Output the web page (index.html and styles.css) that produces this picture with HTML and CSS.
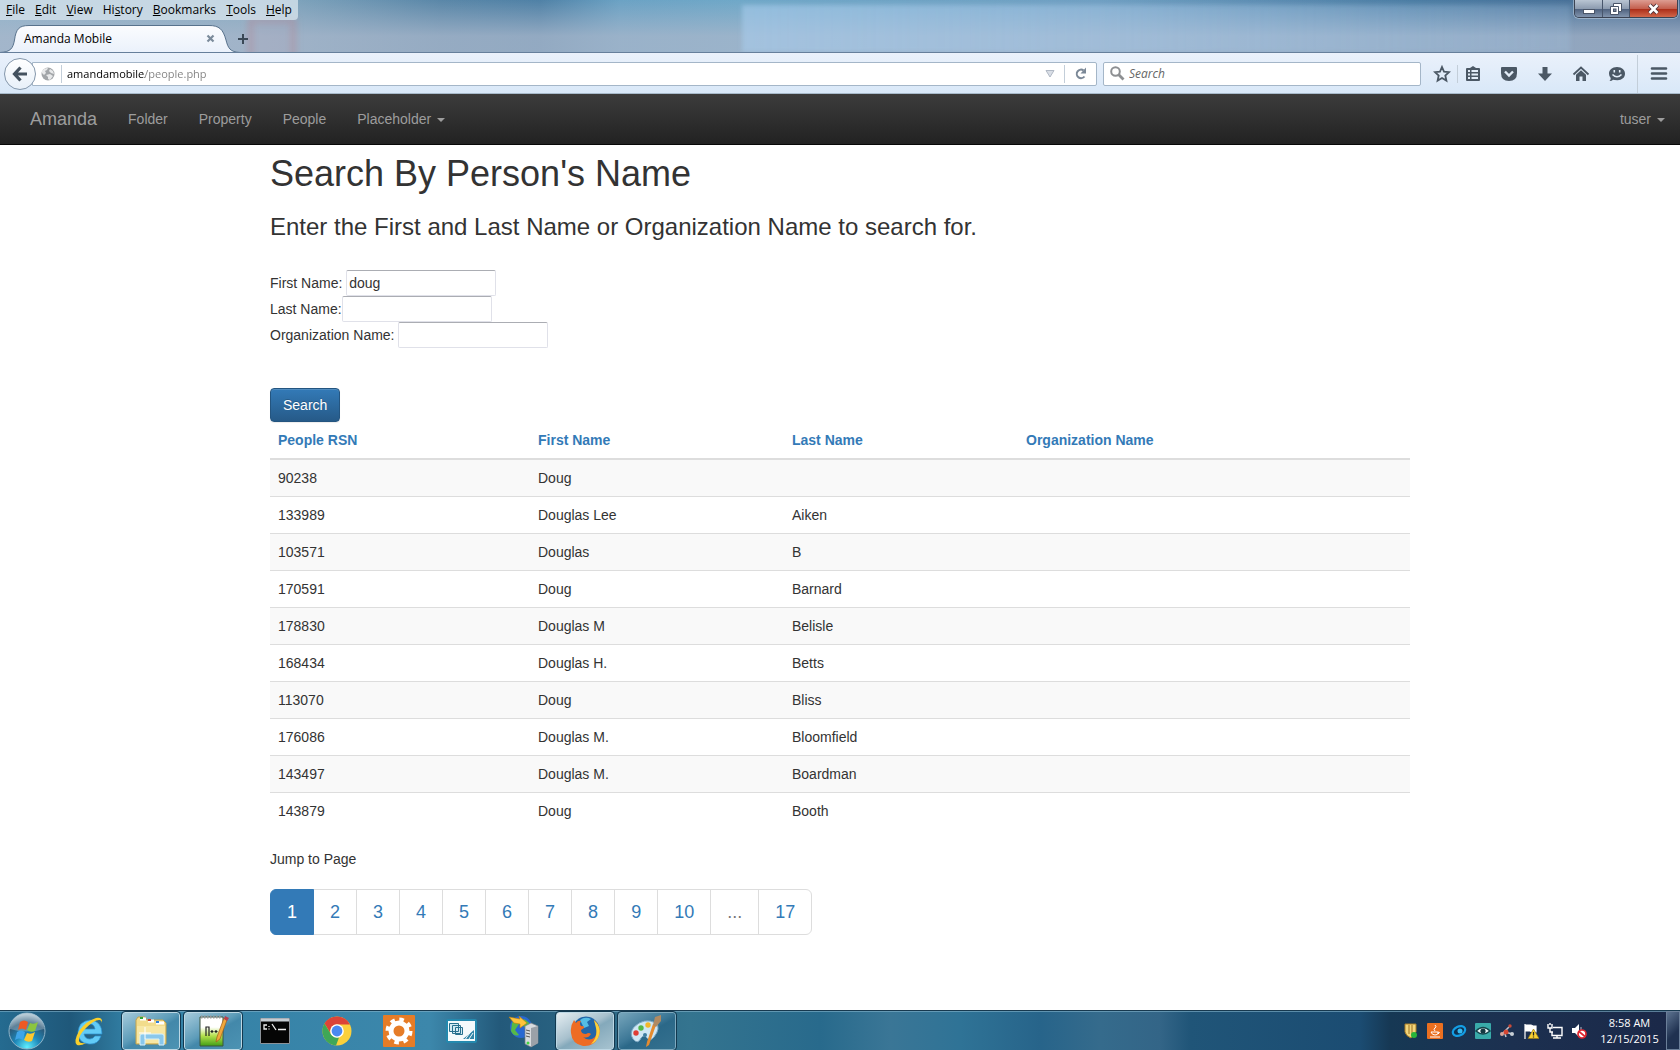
FILE: index.html
```html
<!DOCTYPE html>
<html lang="en">
<head>
<meta charset="utf-8">
<title>Amanda Mobile</title>
<link rel="stylesheet" href="styles.css">
</head>
<body>
<header class="titlebar">
  <div class="title-main">
    <nav class="menubar" aria-label="Application menu">
      <button class="menu"><u>F</u>ile</button>
      <button class="menu"><u>E</u>dit</button>
      <button class="menu"><u>V</u>iew</button>
      <button class="menu">Hi<u>s</u>tory</button>
      <button class="menu"><u>B</u>ookmarks</button>
      <button class="menu"><u>T</u>ools</button>
      <button class="menu"><u>H</u>elp</button>
    </nav>
    <div class="tabs">
      <div class="tab">
        <svg class="tab-shape" viewBox="0 0 240 29" aria-hidden="true"><defs><linearGradient id="tabfill" x2="0" y2="1"><stop stop-color="#fbfcfe"/><stop offset="1" stop-color="#eaf1fb"/></linearGradient></defs><path d="M0 29V28.500C11 28 13 24 14.500 16C16 5 19 1.500 29 1.500H209C219 1.500 223 5 226 16C228 24 230 28 240 28.500V29Z" fill="url(#tabfill)"/><path d="M0 28.500C11 28 13 24 14.500 16C16 5 19 1.500 29 1.500H209C219 1.500 223 5 226 16C228 24 230 28 240 28.500" fill="none" stroke="#58728c"/></svg>
        <span class="tab-title">Amanda Mobile</span>
        <button class="tab-close" aria-label="Close tab"><svg width="9" height="9" viewBox="0 0 9 9"><path d="M1.500 1.500L7.500 7.500M7.500 1.500L1.500 7.500" stroke="#7b8b9b" stroke-width="2.200"/></svg></button>
      </div>
      <button class="tab-new" aria-label="New tab"><svg width="12" height="12" viewBox="0 0 12 12"><path d="M6 1V11M1 6H11" stroke="#3a4856" stroke-width="2"/></svg></button>
    </div>
  </div>
  <div class="window-controls">
    <button class="wc wc-min" aria-label="Minimize"><svg width="12" height="12" viewBox="0 0 12 12"><rect x=".500" y="6.500" width="11" height="4" fill="#fff" stroke="#4a5568"/></svg></button>
    <button class="wc wc-max" aria-label="Restore"><svg width="12" height="12" viewBox="0 0 12 12"><path d="M3.500 .500H11.500V8.500H8.500V11.500H.500V3.500H3.500Z" fill="#fff" stroke="#4a5568"/><path d="M3 3.500H8.500V9" fill="none" stroke="#4a5568"/><rect x="3.500" y="6" width="2.500" height="2.500" fill="#7b8aa0" stroke="#4a5568"/></svg></button>
    <button class="wc wc-close" aria-label="Close"><svg width="13" height="12" viewBox="0 0 13 12"><path d="M2.500 2L10.500 10M10.500 2L2.500 10" stroke="#4a3038" stroke-width="4.500"/><path d="M2.500 2L10.500 10M10.500 2L2.500 10" stroke="#fff" stroke-width="2.600"/></svg></button>
  </div>
</header>

<div class="toolbar">
  <button class="back" aria-label="Back"><svg width="16" height="16" viewBox="0 0 16 16"><path d="M8.500 1.500L2.500 8L8.500 14.500M3 8H15" fill="none" stroke="#44525f" stroke-width="3.200"/></svg></button>
  <div class="urlbar">
    <svg width="14" height="14" viewBox="0 0 14 14" aria-hidden="true"><circle cx="7" cy="7" r="6.500" fill="#a2a5a8"/><path d="M1 4Q3 1 7 1L6 3L4 4L5 6L3 8L1 6ZM9 2L12 4L13 7L10 6L8 4ZM5 8L9 7L12 9L9 13L7 12V10Z" fill="#e8e9ea"/></svg>
    <span class="sep"></span>
    <input class="url" aria-label="Address" value="amandamobile/people.php">
    <button class="ico drop" aria-label="History"><svg width="10" height="8" viewBox="0 0 10 8"><path d="M1 .500H9L5 7Z" fill="#d9dee6" stroke="#b0b8c4"/></svg></button>
    <span class="sep"></span>
    <button class="ico reload" aria-label="Reload"><svg width="12" height="13" viewBox="0 0 12 13"><path d="M9.500 9.500A4.300 4.300 0 1 1 8.500 3.300" fill="none" stroke="#7b8897" stroke-width="2"/><path d="M11 .500V6.500H5.500Z" fill="#7b8897"/></svg></button>
  </div>
  <div class="searchbar">
    <svg width="15" height="15" viewBox="0 0 15 15" aria-hidden="true"><circle cx="5.500" cy="5.500" r="4.300" fill="none" stroke="#8d8f92" stroke-width="2"/><path d="M8.500 8.500L13.500 13.500" stroke="#8d8f92" stroke-width="2.800"/></svg>
    <input class="searchinput" aria-label="Search" placeholder="Search">
  </div>
  <div class="tools">
    <button class="tool star" aria-label="Bookmark"><svg width="18" height="18" viewBox="0 0 18 18"><path d="M9 2L11 6.700L16 7.200L12.300 10.500L13.400 15.600L9 13L4.600 15.600L5.700 10.500L2 7.200L7 6.700Z" fill="none" stroke="#4b5865" stroke-width="1.800"/></svg></button>
    <span class="sep"></span>
    <button class="tool" aria-label="Bookmarks list"><svg width="18" height="18" viewBox="0 0 18 18"><path d="M6 3L9 1L12 3H15Q16 3 16 4V15Q16 16 15 16H3Q2 16 2 15V4Q2 3 3 3Z" fill="#4b5865"/><path d="M4 6H6M7.500 6H14M4 9.500H6M7.500 9.500H14M4 13H6M7.500 13H14" stroke="#e3edf8" stroke-width="2"/></svg></button>
    <button class="tool" aria-label="Pocket"><svg width="18" height="18" viewBox="0 0 18 18"><path d="M2 2H16Q17 2 17 3V8Q17 16 9 16Q1 16 1 8V3Q1 2 2 2Z" fill="#4b5865"/><path d="M5 6.500L9 10.500L13 6.500" fill="none" stroke="#e3edf8" stroke-width="2.400"/></svg></button>
    <button class="tool" aria-label="Downloads"><svg width="18" height="18" viewBox="0 0 18 18"><path d="M6.500 2H11.500V8.500H16L9 16L2 8.500H6.500Z" fill="#4b5865"/></svg></button>
    <button class="tool" aria-label="Home"><svg width="18" height="18" viewBox="0 0 18 18"><path d="M1.500 9.500L9 2.500L16.500 9.500" fill="none" stroke="#4b5865" stroke-width="1.800"/><path d="M4 9.700L9 5.200L14 9.700V16H10.500V11.500H7.500V16H4Z" fill="#4b5865"/></svg></button>
    <button class="tool" aria-label="Hello"><svg width="18" height="18" viewBox="0 0 18 18"><path d="M9 2C14 2 17 5 17 8.700C17 12.500 14 15 9.500 15.200Q6 15 5 14.700Q4 16 1.500 16Q3 14.500 2.700 13Q1 11 1 8.700C1 5 4 2 9 2Z" fill="#4b5865"/><path d="M6.300 5V7.500M11.700 5V7.500" stroke="#e3edf8" stroke-width="1.600"/><path d="M4.500 9.500Q9 14 13.500 9.500" fill="none" stroke="#e3edf8" stroke-width="1.600"/></svg></button>
    <span class="sep tall"></span>
    <button class="tool burger" aria-label="Menu"><svg width="18" height="18" viewBox="0 0 18 18"><path d="M2 3.500H16M2 8.500H16M2 13.500H16" stroke="#4b5865" stroke-width="2.600" stroke-linecap="round"/></svg></button>
  </div>
</div>

<nav class="navbar">
  <a class="brand" href="#">Amanda</a>
  <a class="navlink" href="#">Folder</a>
  <a class="navlink" href="#">Property</a>
  <a class="navlink" href="#">People</a>
  <a class="navlink" href="#">Placeholder<span class="caret"></span></a>
  <a class="navlink user" href="#">tuser<span class="caret"></span></a>
</nav>

<main class="page">
  <div class="container">
    <h1>Search By Person's Name</h1>
    <h3>Enter the First and Last Name or Organization Name to search for.</h3>
    <form class="people-form">
      <div class="field"><label for="first">First Name:</label> <input id="first" value="doug"></div>
      <div class="field"><label for="last">Last Name:</label><input id="last"></div>
      <div class="field"><label for="org">Organization Name:</label> <input id="org"></div>
      <button class="btn" type="button">Search</button>
    </form>
    <table class="table">
      <colgroup><col class="col-rsn"><col class="col-first"><col class="col-last"><col></colgroup>
      <thead><tr><th><a href="#">People RSN</a></th><th><a href="#">First Name</a></th><th><a href="#">Last Name</a></th><th><a href="#">Organization Name</a></th></tr></thead>
      <tbody>
        <tr><td>90238</td><td>Doug</td><td></td><td></td></tr>
        <tr><td>133989</td><td>Douglas Lee</td><td>Aiken</td><td></td></tr>
        <tr><td>103571</td><td>Douglas</td><td>B</td><td></td></tr>
        <tr><td>170591</td><td>Doug</td><td>Barnard</td><td></td></tr>
        <tr><td>178830</td><td>Douglas M</td><td>Belisle</td><td></td></tr>
        <tr><td>168434</td><td>Douglas H.</td><td>Betts</td><td></td></tr>
        <tr><td>113070</td><td>Doug</td><td>Bliss</td><td></td></tr>
        <tr><td>176086</td><td>Douglas M.</td><td>Bloomfield</td><td></td></tr>
        <tr><td>143497</td><td>Douglas M.</td><td>Boardman</td><td></td></tr>
        <tr><td>143879</td><td>Doug</td><td>Booth</td><td></td></tr>
      </tbody>
    </table>
    <p class="jump">Jump to Page</p>
    <ul class="pagination">
      <li><a class="active" href="#">1</a></li><li><a href="#">2</a></li><li><a href="#">3</a></li><li><a href="#">4</a></li><li><a href="#">5</a></li><li><a href="#">6</a></li><li><a href="#">7</a></li><li><a href="#">8</a></li><li><a href="#">9</a></li><li><a href="#">10</a></li><li><span>...</span></li><li><a href="#">17</a></li>
    </ul>
  </div>
</main>

<footer class="taskbar">
  <button class="start" aria-label="Start"><svg width="40" height="38" viewBox="0 0 40 38"><defs><radialGradient id="orb" cy=".95" r=".9"><stop stop-color="#5ff0ff"/><stop offset=".4" stop-color="#1e86b8"/><stop offset=".75" stop-color="#2b5877"/><stop offset="1" stop-color="#9fb9c8"/></radialGradient></defs><circle cx="20" cy="19" r="18" fill="url(#orb)" stroke="#8fb4c8"/><path d="M3 17A17 16 0 0 1 37 17Q20 22 3 17Z" fill="#fff" opacity=".25"/><path d="M13 10Q17 7 21 10L19 18Q15 15 11 18Z" fill="#ee5a24"/><path d="M23 11Q27 13 31 10L28 19Q24 21 20 18Z" fill="#8cc63f"/><path d="M10 20Q14 17 18 20L16 28Q12 25 8 28Z" fill="#3fa5e8"/><path d="M20 21Q24 23 28 20L25 29Q21 31 17 28Z" fill="#fdc82f"/></svg></button>
  <div class="apps">
    <button class="app" aria-label="Internet Explorer"><svg width="32" height="32" viewBox="0 0 32 32"><path d="M29 19H11Q12 24 17 24Q20 24 22 21H28Q25 30 16 29Q5 28 5 17Q6 6 17 5Q29 6 29 19ZM11 14H22Q21 9 17 9Q12 9 11 14Z" fill="#62cbf6" stroke="#2b8fd0" stroke-width=".7"/><path d="M29 8Q30 2 23 3Q13 6 6 16Q0 27 4 30Q8 31 13 28Q7 29 6 26Q5 21 13 13Q22 4 27 5Q29 6 29 8Z" fill="#f9cf2c"/></svg></button>
    <button class="app open" aria-label="Windows Explorer"><svg width="34" height="32" viewBox="0 0 34 32"><path d="M2 5L4 2H11L13 5H29L32 8V29H2Z" fill="#f2dc8c" stroke="#c4a44c"/><path d="M6 4H12M14 6H20M22 8H30" stroke="#fff" stroke-width="3"/><path d="M6 3H9" stroke="#35a535" stroke-width="2"/><path d="M14 5H17" stroke="#c8372c" stroke-width="2"/><path d="M22 7H25" stroke="#2f7ed8" stroke-width="2"/><path d="M3 11H31V28H3Z" fill="#f7e7a4"/><path d="M6 30V21Q6 19 8 19H28Q30 19 30 21V30H25V24H11V30Z" fill="#8ac8ec" stroke="#d7f1fc"/><path d="M11 12V24M5 18H17" stroke="#fff"/></svg></button>
    <button class="app open" aria-label="Notepad++"><svg width="32" height="34" viewBox="0 0 32 34"><defs><linearGradient id="npp" x2="0" y2="1"><stop offset=".35" stop-color="#fff"/><stop offset=".65" stop-color="#b4e04c"/><stop offset="1" stop-color="#3f9e14"/></linearGradient></defs><path d="M3 3H26V32H3Z" fill="url(#npp)" stroke="#3d5540"/><path d="M4 3H25" stroke="#999" stroke-width="3" stroke-dasharray="1.500 1.500"/><path d="M9 22V13H12V22M13.500 17.500H16.500M15 16V19M17.500 17.500H20.500M19 16V19" fill="none" stroke="#222" stroke-width="1.200"/><path d="M27 4L30 6L23 25L19 28L20 23Z" fill="#efa83b" stroke="#a05c18" stroke-width=".7"/><path d="M28 2L32 4L30 7L27 5Z" fill="#b54050"/></svg></button>
    <button class="app" aria-label="Command Prompt"><svg width="30" height="26" viewBox="0 0 30 26"><path d="M.500 .500H29.500V25.500H.500Z" fill="#050505" stroke="#8b9299"/><path d="M1 2H29" stroke="#c6ccd2" stroke-width="3"/><path d="M7 7H4V11H7M9 8V9M9 10.500V11.500M12 6L16 12M18 11.500H26" fill="none" stroke="#eee" stroke-width="1.300"/></svg></button>
    <button class="app" aria-label="Chrome"><svg width="30" height="30" viewBox="0 0 30 30"><circle cx="15" cy="15" r="14.500" fill="#fbd03b"/><path d="M2.500 7.500A14.500 14.500 0 0 1 28 8.500H15A6.500 6.500 0 0 0 9 18Z" fill="#dc4437"/><path d="M2.500 7.500L9.500 19Q12 22 17 21.500L14 29.500A14.500 14.500 0 0 1 2.500 7.500Z" fill="#3fa757"/><circle cx="15" cy="15" r="6.800" fill="#fff"/><circle cx="15" cy="15" r="5.400" fill="#4a89f0"/></svg></button>
    <button class="app" aria-label="Settings tool"><svg width="32" height="32" viewBox="0 0 32 32"><rect width="32" height="32" rx="1" fill="#e67c27"/><circle cx="16" cy="16" r="8" fill="none" stroke="#fff" stroke-width="5"/><circle cx="16" cy="16" r="11.500" fill="none" stroke="#fff" stroke-width="4" stroke-dasharray="4.500 4.532"/></svg></button>
    <button class="app" aria-label="Remote desktop manager"><svg width="31" height="24" viewBox="0 0 31 24"><rect x="1" y="1" width="29" height="22" rx="1" fill="#f4fafc" stroke="#2489ae" stroke-width="2"/><path d="M3.500 4.500H12.500V12.500H3.500ZM6.500 6.500H14.500V14.500H6.500ZM9.500 8.500H16.500V15.500H9.500Z" fill="#d3eaf3" stroke="#27708e"/><path d="M17 20L28 11V20Z" fill="#3185a7"/><path d="M19.500 20L24.500 13M23 20L27 14" stroke="#f4fafc"/></svg></button>
    <button class="app" aria-label="Server manager"><svg width="32" height="33" viewBox="0 0 32 33"><circle cx="14" cy="12" r="11" fill="#2868d2"/><path d="M5 8Q9 3 12 9L8 15L12 20Q7 22 4 16ZM17 4Q23 7 24 12L19 14L15 9Z" fill="#58b947"/><path d="M2 2L13 4L12 1L20 8L13 13L13 9L7 8Z" fill="#ffc43b" stroke="#b97e13" stroke-width=".6"/><path d="M18 11L24 8L31 11V28L24 32L18 29Z" fill="#d8dbde" stroke="#747b84" stroke-width=".7"/><path d="M24 13L31 11V28L24 32Z" fill="#9ba1a8"/><path d="M19 15L23 16M19 18L23 19M19 21L23 22" stroke="#555"/><circle cx="21" cy="28" r="1.500" fill="#42d742"/></svg></button>
    <button class="app open focus" aria-label="Firefox"><svg width="32" height="32" viewBox="0 0 32 32"><circle cx="17" cy="15" r="13.500" fill="#2366a8"/><path d="M11 5Q16 1 22 4L18 7L20 11L15 13Z" fill="#55bde5"/><path d="M25 5Q34 13 29 23Q24 32 14 31Q3 29 2 18Q1 11 5 5L7 8Q9 5 12 6Q10 9 12 11Q16 11 15 13L12 15Q12 19 17 19Q20 17 22 19Q19 24 14 22Q20 27 26 22Q30 16 25 5Z" fill="#ee6c24"/><path d="M25 5Q34 13 29 23Q26 28 22 29Q29 22 27 13Z" fill="#fcd13a"/></svg></button>
    <button class="app open dim" aria-label="Paint"><svg width="34" height="32" viewBox="0 0 34 32"><path d="M4 12Q14 2 26 8Q31 13 24 22Q20 27 17 23Q14 19 11 23Q8 30 3 24Q-1 18 4 12Z" fill="#cfe7f4" stroke="#7ba7c2"/><circle cx="6" cy="18" r="2.700" fill="#df3d35"/><circle cx="11" cy="13" r="2.700" fill="#53b749"/><circle cx="18" cy="10" r="2.700" fill="#f3b72a"/><circle cx="15" cy="20" r="2" fill="#3e7da0"/><path d="M26 10L19 30L16 32L17 27L23 9Z" fill="#e58b2f"/><path d="M23 10L25 2L31 0L31 6L26 12Z" fill="#b08a62"/></svg></button>
  </div>
  <div class="tray">
    <svg viewBox="0 0 16 16"><path d="M2 1H13V9L8 15Q3 13 2 9Z" fill="#f2d57b" stroke="#a97d24"/><path d="M6 2V11M9 2V12" stroke="#9c7320"/><circle cx="11" cy="12" r="3" fill="#27b43a"/></svg>
    <svg viewBox="0 0 16 16"><rect width="16" height="16" rx="1" fill="#ea6f20"/><path d="M8 2Q10 4 8 5T8 8M4 9H11V10Q11 12 8 12T4 9M11 9Q14 9 11 11M3 14H13" fill="none" stroke="#fff" stroke-width="1"/></svg>
    <svg viewBox="0 0 16 16"><ellipse cx="8" cy="8" rx="6.500" ry="4.500" transform="rotate(-25 8 8)" fill="#0d3153" stroke="#139ee5" stroke-width="2.200"/><circle cx="9" cy="8" r="2.500" fill="#36baf2"/></svg>
    <svg viewBox="0 0 16 16"><rect width="16" height="16" rx="1" fill="#39aaa9"/><path d="M1 8Q8 1 15 8Q8 14 1 8Z" fill="#f0fafa" stroke="#14454c" stroke-width="1.500"/><circle cx="8" cy="8" r="2.600" fill="#153840"/></svg>
    <svg viewBox="0 0 16 16"><path d="M3 11L10 4M6 9L13 11M5 8L7 14" stroke="#bfc6cf" stroke-width="1.500"/><circle cx="7" cy="9" r="2.500" fill="#d64632"/><circle cx="11" cy="3" r="1.700" fill="#cb4b39"/><circle cx="3" cy="11" r="2" fill="#d9a59b"/><circle cx="13" cy="11" r="2" fill="#c8cfd6"/></svg>
    <svg viewBox="0 0 16 16"><path d="M2 1V16M3 2H8L10 3H13V9H9L7 8H3Z" fill="#fff" stroke="#fff" stroke-width="1.200"/><path d="M10.500 6L16 15.500H5Z" fill="#fbd232" stroke="#9a7a15" stroke-width=".7"/><path d="M10.500 9V12.500M10.500 13.500V14.500" stroke="#222" stroke-width="1.300"/></svg>
    <svg viewBox="0 0 16 16"><path d="M6 4.500H15V12.500H5V9M10 12.500V15M6 15H14M1 1V5H5V1M3 5V9H6M3 0V2" fill="none" stroke="#fff" stroke-width="1.400"/></svg>
    <svg viewBox="0 0 16 16"><path d="M1 5H4L8 1V14L4 10H1Z" fill="#fff"/><path d="M10 4V10" stroke="#b5bdc9"/><circle cx="11" cy="11" r="4" fill="#fff" stroke="#df2730" stroke-width="1.700"/><path d="M8 8.500L14 13.500" stroke="#df2730" stroke-width="1.700"/></svg>
  </div>
  <time class="clock"><span>8:58 AM</span><span>12/15/2015</span></time>
  <button class="desktop" aria-label="Show desktop"></button>
</footer>
</body>
</html>
```
FILE: styles.css
```css
* { box-sizing: border-box; }
body {
  margin: 0;
  min-height: 100vh;
  display: flex;
  flex-direction: column;
  font: 14px/20px "Liberation Sans", Arial, sans-serif;
  color: #333;
  background: #fff;
}
button, input { font: inherit; color: inherit; margin: 0; }
button { padding: 0; border: 0; background: none; }
svg { display: block; flex: none; }
a { color: #337ab7; text-decoration: none; }

/* window frame */
.titlebar {
  position: relative;
  display: flex;
  justify-content: space-between;
  align-items: flex-start;
  height: 53px;
  overflow: hidden;
  border-bottom: 1px solid #667f9b;
  font: 12px/20px "Open Sans", "Noto Sans", sans-serif;
  color: #000;
  background:
    linear-gradient(180deg, transparent, #a9b7cbc0 36px),
    linear-gradient(90deg, #8fb3ca 0, #86a9c0 260px, #5a87a8 440px, #4f81a6 540px, #6ba2c4 620px, #6fa8c8 740px, #6f9fc2 1100px, #4b7da4 84%, #476a91);
}
/* window showing faintly through the glass */
.titlebar::before {
  content: "";
  position: absolute;
  inset: 5px 110px 0 742px;
  background: linear-gradient(90deg, #a9cdee90, #a9cdee30);
  filter: blur(2px);
}
/* blurred desktop icon behind the glass */
.titlebar::after {
  content: "";
  position: absolute;
  left: 248px;
  top: 18px;
  width: 38px;
  height: 38px;
  border: 5px solid #b57f8c60;
  background: #b0a5b840;
  filter: blur(3px);
}
.title-main { position: relative; z-index: 1; display: flex; flex-direction: column; }
.menubar {
  display: flex;
  width: 298px;
  height: 20px;
  justify-content: space-between;
  padding: 0 6px;
  border-radius: 0 0 4px 0;
  background: #d3e0ead0;
}
.tabs { display: flex; align-items: center; padding-top: 4px; }
.tab {
  position: relative;
  display: flex;
  align-items: center;
  justify-content: space-between;
  width: 240px;
  height: 29px;
  padding: 0 25px 0 24px;
}
.tab-shape { position: absolute; inset: 0; width: 240px; height: 29px; }
.tab-title, .tab-close { position: relative; }
.tab-new { margin-left: -3px; }
.window-controls {
  position: relative;
  display: flex;
  height: 18px;
  margin-right: 2px;
  border: 1px solid #3b4353;
  border-top: 0;
  border-radius: 0 0 5px 5px;
  overflow: hidden;
  box-shadow: 0 0 0 1px #c7d5e480;
}
.wc {
  display: grid;
  place-items: center;
  width: 28px;
  border-right: 1px solid #48566c;
  background: linear-gradient(#b9c5d3, #8d9cb0 50%, #4c5f7c 51%, #8294ad);
}
.wc-max { width: 27px; }
.wc-close { width: 47px; border: 0; background: linear-gradient(#dd9d92, #c4604f 50%, #a92a16 51%, #d2674a); }

/* browser toolbar */
.toolbar {
  display: flex;
  align-items: center;
  height: 41px;
  padding: 1px 12px 0 4px;
  border-bottom: 1px solid #a8bacb;
  background: linear-gradient(#eaf1fb, #d9e8f8);
  font: 12px/18px "Open Sans", "Noto Sans", sans-serif;
}
.back {
  position: relative;
  display: grid;
  place-items: center;
  width: 32px;
  height: 32px;
  border: 1px solid #8497ab;
  border-radius: 50%;
  background: linear-gradient(#fff, #e8f0f9);
}
.urlbar, .searchbar {
  display: flex;
  align-items: center;
  height: 24px;
  border: 1px solid #a4b6c8;
  background: #fff;
}
.urlbar { flex: 1; margin: 0 6px 0 -4px; padding: 0 9px 0 8px; border-radius: 0 2px 2px 0; }
.searchbar { width: 318px; gap: 4px; padding: 0 6px; border-radius: 2px; }
.sep { flex: none; width: 1px; height: 18px; background: #c3ced9; }
.urlbar svg + .sep { margin: 0 5px 0 6px; }
.url, .searchinput { flex: 1; min-width: 0; padding: 0; border: 0; outline: 0; background-color: transparent; }
.url {
  font-size: 11px;
  color: #000;
  background-image: linear-gradient(90deg, #000 78px, #808080 78px);
  background-clip: text;
  -webkit-background-clip: text;
  -webkit-text-fill-color: transparent;
}
.searchinput::placeholder { color: #666; font-style: italic; opacity: 1; }
.drop { margin-right: 9px; }
.reload { margin-left: 10px; }
.tools { display: flex; align-items: center; }
.tool { width: 18px; height: 18px; margin-left: 18px; }
.star { margin: 0 6px 0 12px; }
.star + .sep + .tool { margin-left: 6px; }
.tall { height: 38px; margin-left: 11px; }
.burger { margin-left: 12px; }

/* site navigation */
.navbar {
  display: flex;
  gap: 1px;
  height: 51px;
  padding: 0 15px;
  border-bottom: 1px solid #080808;
  background: linear-gradient(#3c3c3c, #222);
}
.brand, .navlink { padding: 15px; color: #9d9d9d; }
.brand { font-size: 18px; }
.user { margin-left: auto; padding-right: 0; }
.caret {
  display: inline-block;
  margin-left: 6px;
  vertical-align: middle;
  border: 4px solid transparent;
  border-top-color: currentColor;
  border-bottom: 0;
}

/* people search */
.page { flex: 1; }
.container { max-width: 1170px; margin: 0 auto; padding: 9px 15px 0; }
h1, h3 { margin: 0; font-weight: 500; }
h1 { font-size: 36px; line-height: 40px; }
h3 { margin: 20px 0 30px; font-size: 24px; line-height: 26px; }
.field { height: 26px; line-height: 26px; }
.field input {
  width: 150px;
  height: 26px;
  padding: 1px 2px;
  border: 1px solid #e0e1e9;
  border-top-color: #abadb3;
  border-radius: 2px;
  vertical-align: top;
  line-height: 20px;
}
.btn {
  display: block;
  height: 34px;
  margin-top: 40px;
  padding: 0 12px;
  border: 1px solid #245580;
  border-radius: 4px;
  color: #fff;
  text-shadow: 0 -1px 0 #0003;
  background: linear-gradient(#337ab7, #265a88);
  box-shadow: inset 0 1px 0 #ffffff26, 0 1px 1px #00000013;
}
.table { width: 100%; margin-bottom: 20px; border-collapse: separate; border-spacing: 0; table-layout: fixed; }
.col-rsn { width: 260px; }
.col-first { width: 254px; }
.col-last { width: 234px; }
th, td { padding: 8px; text-align: left; border-bottom: 1px solid #ddd; }
th { border-bottom-width: 2px; }
tbody tr:nth-child(odd) { background: #f9f9f9; }
tbody tr:last-child td { border-bottom: 0; }
.jump { margin: 0 0 20px; }
.pagination { display: flex; margin: 0 0 20px; padding: 0; list-style: none; font-size: 18px; line-height: 24px; }
.pagination a, .pagination span { display: block; margin-left: -1px; padding: 10px 16px; border: 1px solid #ddd; }
.pagination span { color: #777; }
.pagination .active { position: relative; margin: 0; color: #fff; background: #337ab7; border-color: #337ab7; border-radius: 6px 0 0 6px; }
.pagination li:last-child a { border-radius: 0 6px 6px 0; }

/* desktop taskbar */
.taskbar {
  display: flex;
  height: 40px;
  border-top: 1px solid #17394f;
  box-shadow: inset 0 1px 0 #7fb0c8a0;
  background: linear-gradient(90deg, #256b90 0, #1f587a 70px, #3381a6 130px, #3c87ab 430px, #23597a 500px, #34748f 690px, #286a8c 820px, #3a7696 890px, #2f7396 960px, #27648a 1040px, #356b8c 1100px, #336587 1160px, #205578 1190px, #1b4c72 1360px, #163854 1390px, #1c3050 90%, #1b2848);
}
.start { width: 40px; margin: 0 10px 0 7px; }
.apps { display: flex; flex: 1; gap: 4px; padding-left: 3px; }
.app { display: grid; place-items: center; width: 58px; margin-top: 1px; }
.open {
  border: 1px solid #bcd7e4;
  border-radius: 3px;
  outline: 1px solid #12384f;
  outline-offset: 0;
  background: linear-gradient(150deg, #a5cadb, #5d9cb9 45%, #4388aa 55%, #4c93b3);
}
.focus { background: linear-gradient(150deg, #e4edf1, #a7c0cd 45%, #84a9bb 55%, #a7c3d0); }
.dim { border-color: #7faabf; background: linear-gradient(150deg, #76a5bb, #3d7897 45%, #2b6888 55%, #35718f); }
.tray { display: flex; align-items: center; gap: 8px; }
.tray svg { width: 16px; height: 16px; }
.clock {
  display: flex;
  flex-direction: column;
  justify-content: center;
  width: 79px;
  padding-left: 6px;
  font: 11px/16px "Open Sans", "Noto Sans", sans-serif;
  text-align: center;
  color: #fff;
}
.desktop { width: 14px; border: 1px solid #6b7f99; background: linear-gradient(135deg, #5d7390, #1f3150 60%); }
```
